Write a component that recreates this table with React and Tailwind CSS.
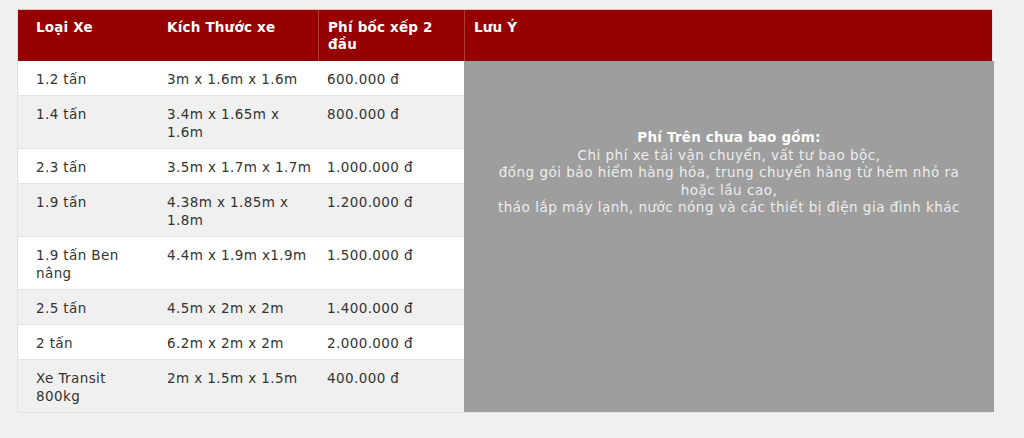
const rows = [
  { type: ['1.2 tấn'], size: ['3m x 1.6m x 1.6m'], fee: '600.000 đ' },
  { type: ['1.4 tấn'], size: ['3.4m x 1.65m x', '1.6m'], fee: '800.000 đ' },
  { type: ['2.3 tấn'], size: ['3.5m x 1.7m x 1.7m'], fee: '1.000.000 đ' },
  { type: ['1.9 tấn'], size: ['4.38m x 1.85m x', '1.8m'], fee: '1.200.000 đ' },
  { type: ['1.9 tấn Ben', 'nâng'], size: ['4.4m x 1.9m x1.9m'], fee: '1.500.000 đ' },
  { type: ['2.5 tấn'], size: ['4.5m x 2m x 2m'], fee: '1.400.000 đ' },
  { type: ['2 tấn'], size: ['6.2m x 2m x 2m'], fee: '2.000.000 đ' },
  { type: ['Xe Transit', '800kg'], size: ['2m x 1.5m x 1.5m'], fee: '400.000 đ' },
]

function Lines({ lines }) {
  return lines.map((l, i) => (
    <span key={i}>
      {i > 0 && <br />}
      {l}
    </span>
  ))
}

export default function App() {
  return (
    <div className="min-h-[438px] w-[1024px] bg-[#f0f0f0] pt-[9px] pl-[17px]" style={{ fontFamily: '"DejaVu Sans", "Open Sans", sans-serif' }}>
      <div className="w-[976px] border border-[#e2e2e2] border-t-0">
        {/* Header */}
        <div className="grid grid-cols-[141px_159px_146px_530px] bg-[#950000] text-white font-bold text-[13.5px] tracking-[0.2px] leading-[17px] h-[52px] border-t border-[#f3b9b3]">
          <div className="pl-[18px] pt-[9px]">Loại Xe</div>
          <div className="pl-[8px] pt-[9px]">Kích Thước xe</div>
          <div className="pl-[9px] pt-[9px] border-l border-[#b33a3a]">Phí bốc xếp 2<br />đầu</div>
          <div className="pl-[9px] pt-[9px] border-l border-[#b33a3a]">Lưu Ý</div>
        </div>

        {/* Body */}
        <div className="grid grid-cols-[446px_530px]">
          <div className="flex flex-col text-[13.5px] tracking-[0.4px] leading-[18px] text-[#333]">
            {rows.map((r, i) => (
              <div
                key={i}
                className={`grid grid-cols-[141px_159px_146px] border-b border-[#e4e4e4] last:border-b-0 ${i % 2 === 0 ? 'bg-white' : 'bg-[#f0f0f0]'}`}
              >
                <div className="pl-[18px] pt-[9px] pb-[7px]"><Lines lines={r.type} /></div>
                <div className="pl-[8px] pt-[9px] pb-[7px]"><Lines lines={r.size} /></div>
                <div className="pl-[9px] pt-[9px] pb-[7px]">{r.fee}</div>
              </div>
            ))}
          </div>
          <div className="bg-[#9e9e9e] text-center text-[13.5px] tracking-[0.5px] leading-[17.5px] text-[#ededed] pt-[68px]">
            <p className="font-bold text-white tracking-[0.2px]">Phí Trên chưa bao gồm:</p>
            <p>Chi phí xe tải vận chuyển, vất tư bao bộc,</p>
            <p>đống gói bảo hiểm hàng hóa, trung chuyển hàng từ hẻm nhỏ ra<br />hoặc lầu cao,</p>
            <p>tháo lắp máy lạnh, nước nóng và các thiết bị điện gia đình khác</p>
          </div>
        </div>
      </div>
    </div>
  )
}
